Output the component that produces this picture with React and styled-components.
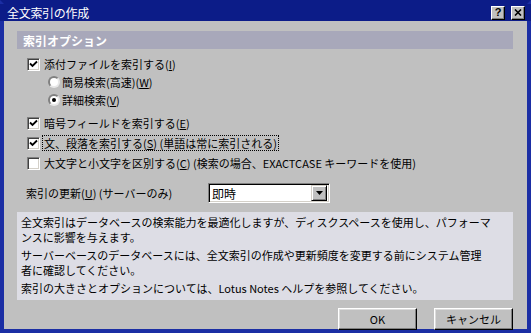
import React from 'react';
import styled, { createGlobalStyle } from 'styled-components';

const GlobalStyle = createGlobalStyle`
  html, body {
    margin: 0;
    padding: 0;
    background: #c0c0c0;
  }
  body {
    font-family: "Noto Sans CJK JP", "Liberation Sans", sans-serif;
    font-size: 11px;
    color: #000;
  }
`;

const Window = styled.div`
  box-sizing: border-box;
  width: 531px;
  height: 333px;
  display: flex;
  flex-direction: column;
  border: 4px solid #1b2ea4;
  border-top-color: #0c1c88;
  background: #c0c0c0;
`;

const TitleBar = styled.div`
  height: 18px;
  display: flex;
  align-items: center;
  justify-content: space-between;
  background: #0c1c88;
  margin: 0 -4px;
  padding: 0 6px 0 7px;
`;

const Title = styled.span`
  color: #fff;
  font-size: 12px;
  letter-spacing: -0.3px;
`;

const TitleButtons = styled.div`
  display: flex;
  gap: 6px;
`;

const CaptionButton = styled.div`
  box-sizing: border-box;
  width: 14px;
  height: 14px;
  background: #c0c0c0;
  border: 1px solid;
  border-color: #fff #000 #000 #fff;
  box-shadow: inset -1px -1px 0 #808080;
  display: flex;
  align-items: center;
  justify-content: center;
  font-family: "Liberation Sans", sans-serif;
  font-weight: bold;
  font-size: 11px;
  line-height: 1;
`;

const Body = styled.div`
  flex: 1;
  display: flex;
  flex-direction: column;
  padding: 10px 14px 3px 13px;
`;

const SectionHeader = styled.div`
  height: 18px;
  display: flex;
  align-items: center;
  padding-left: 6px;
  background: #a8a8ba;
  color: #fff;
  font-weight: bold;
  font-size: 12px;
`;

const Options = styled.div`
  display: flex;
  flex-direction: column;
  margin-top: 6px;
`;

const Row = styled.div`
  display: flex;
  align-items: center;
  height: ${p => p.$h || 18}px;
  margin-top: ${p => p.$gap || 0}px;
  padding-left: ${p => p.$indent || 10}px;
  white-space: nowrap;
`;

const Box = styled.span`
  box-sizing: border-box;
  width: 13px;
  height: 13px;
  background: #fff;
  border: 1px solid;
  border-color: #808080 #fff #fff #808080;
  box-shadow: inset 1px 1px 0 #404040, inset -1px -1px 0 #d4d0c8;
  display: flex;
  align-items: center;
  justify-content: center;
  margin-right: 3px;
  flex-shrink: 0;
`;

const Radio = styled.span`
  box-sizing: border-box;
  width: 12px;
  height: 12px;
  border-radius: 50%;
  background: #fff;
  border: 2px solid;
  border-color: #808080 #e8e8e8 #e8e8e8 #808080;
  display: flex;
  align-items: center;
  justify-content: center;
  margin-right: 1px;
  flex-shrink: 0;

  &::after {
    content: '';
    display: ${p => (p.$on ? 'block' : 'none')};
    width: 4px;
    height: 4px;
    border-radius: 50%;
    background: #000;
  }
`;

const Label = styled.span`
  padding: 0 1px;
  outline: ${p => (p.$focus ? '1px dotted #000' : 'none')};
  line-height: 14px;
`;

const UpdateRow = styled.div`
  display: flex;
  align-items: center;
  margin-top: 10px;
  padding-left: 9px;
  white-space: nowrap;
`;

const UpdateLabel = styled.span`
  width: 182px;
`;

const Select = styled.div`
  box-sizing: border-box;
  width: 122px;
  height: 20px;
  background: #fff;
  border: 1px solid;
  border-color: #808080 #fff #fff #808080;
  box-shadow: inset 1px 1px 0 #000, inset -1px -1px 0 #d4d0c8;
  display: flex;
  align-items: center;
  justify-content: space-between;
  padding: 2px 2px 2px 3px;
  font-size: 12px;
`;

const DropButton = styled.div`
  box-sizing: border-box;
  width: 16px;
  height: 16px;
  background: #c0c0c0;
  border: 1px solid;
  border-color: #d4d0c8 #000 #000 #d4d0c8;
  box-shadow: inset 1px 1px 0 #fff, inset -1px -1px 0 #808080;
  display: flex;
  align-items: center;
  justify-content: center;
`;

const InfoPanel = styled.div`
  margin-top: 9px;
  background: #dddde5;
  padding: 3px 4px 4px 4px;
  display: flex;
  flex-direction: column;
  gap: 3px;
  font-size: 11px;
  line-height: 15px;
  white-space: nowrap;
`;

const ButtonRow = styled.div`
  margin-top: 8px;
  display: flex;
  justify-content: flex-end;
  gap: 17px;
`;

const Button = styled.button`
  box-sizing: border-box;
  width: 79px;
  height: 22px;
  background: #c0c0c0;
  border: 1px solid;
  border-color: #fff #000 #000 #fff;
  box-shadow: inset -1px -1px 0 #808080, inset 1px 1px 0 #dcdcdc;
  font-family: "Noto Sans CJK JP", "Liberation Sans", sans-serif;
  font-size: 11px;
  color: #000;
  padding: 0;
`;

const Check = () => (
  <svg width="9" height="9" viewBox="0 0 9 9">
    <path d="M1 3.5 L3.5 6 L8 1.5" stroke="#000" strokeWidth="1.8" fill="none" />
  </svg>
);

function Checkbox({ checked }) {
  return <Box>{checked && <Check />}</Box>;
}

export default function App() {
  return (
    <>
      <GlobalStyle />
      <Window>
        <TitleBar>
          <Title>全文索引の作成</Title>
          <TitleButtons>
            <CaptionButton>?</CaptionButton>
            <CaptionButton>
              <svg width="8" height="7" viewBox="0 0 8 7">
                <path d="M1 0.5 L7 6.5 M7 0.5 L1 6.5" stroke="#000" strokeWidth="1.6" />
              </svg>
            </CaptionButton>
          </TitleButtons>
        </TitleBar>
        <Body>
          <SectionHeader>索引オプション</SectionHeader>
          <Options>
            <Row>
              <Checkbox checked />
              <Label>添付ファイルを索引する(<u>I</u>)</Label>
            </Row>
            <Row $indent={31}>
              <Radio />
              <Label>簡易検索(高速)(<u>W</u>)</Label>
            </Row>
            <Row $indent={31}>
              <Radio $on />
              <Label>詳細検索(<u>V</u>)</Label>
            </Row>
            <Row $h={20} $gap={4}>
              <Checkbox checked />
              <Label>暗号フィールドを索引する(<u>E</u>)</Label>
            </Row>
            <Row $h={20}>
              <Checkbox checked />
              <Label $focus>文、段落を索引する(<u>S</u>) (単語は常に索引される)</Label>
            </Row>
            <Row $h={20}>
              <Checkbox />
              <Label>大文字と小文字を区別する(<u>C</u>) (検索の場合、EXACTCASE キーワードを使用)</Label>
            </Row>
          </Options>
          <UpdateRow>
            <UpdateLabel>索引の更新(<u>U</u>) (サーバーのみ)</UpdateLabel>
            <Select>
              <span>即時</span>
              <DropButton>
                <svg width="7" height="4" viewBox="0 0 7 4">
                  <path d="M0 0 H7 L3.5 4 Z" fill="#000" />
                </svg>
              </DropButton>
            </Select>
          </UpdateRow>
          <InfoPanel>
            <div>
              全文索引はデータベースの検索能力を最適化しますが、ディスクスペースを使用し、パフォーマ
              <br />
              ンスに影響を与えます。
            </div>
            <div>
              サーバーベースのデータベースには、全文索引の作成や更新頻度を変更する前にシステム管理
              <br />
              者に確認してください。
            </div>
            <div>索引の大きさとオプションについては、Lotus Notes ヘルプを参照してください。</div>
          </InfoPanel>
          <ButtonRow>
            <Button>OK</Button>
            <Button>キャンセル</Button>
          </ButtonRow>
        </Body>
      </Window>
    </>
  );
}
